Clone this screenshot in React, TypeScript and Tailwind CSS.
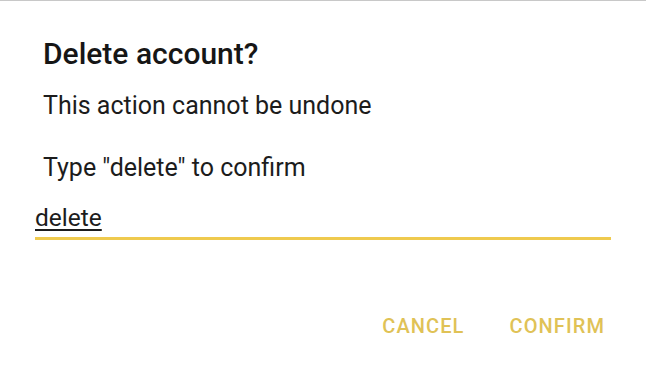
export default function App() {
  return (
    <div
      className="w-[646px] h-[373px] bg-white border-t border-[#c8c8c8] overflow-hidden flex flex-col"
      style={{ fontFamily: 'Roboto, "Liberation Sans", sans-serif' }}
    >
      <div className="pl-[43px] pt-[35px]">
        <h1 className="text-[30px] leading-[36px] font-medium text-[#161616]">Delete account?</h1>
        <p className="mt-[18px] text-[25px] leading-[32px] text-[#1c1c1c]">This action cannot be undone</p>
        <p className="mt-[30px] text-[25px] leading-[32px] text-[#1c1c1c]">Type "delete" to confirm</p>
      </div>
      <div className="mx-[35px] mt-[19px]">
        <div className="text-[24.5px] leading-[30px] text-[#1c1c1c] underline underline-offset-[3px] decoration-[1.5px]">delete</div>
        <div className="mt-[4px] h-[3px] bg-[#efca4e]" />
      </div>
      <div className="mt-[74px] flex justify-end gap-[45px] pr-[41px]">
        <button className="text-[20px] leading-[24px] font-medium tracking-[1.1px] text-[#e0c256]">CANCEL</button>
        <button className="text-[20px] leading-[24px] font-medium tracking-[1.1px] text-[#e0c256]">CONFIRM</button>
      </div>
    </div>
  );
}
